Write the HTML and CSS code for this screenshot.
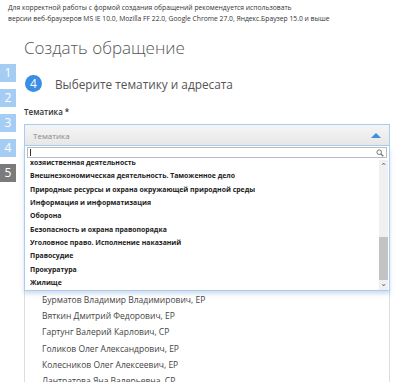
FILE: index.html
```html
<!DOCTYPE html>
<html lang="ru">
<head>
<meta charset="utf-8">
<link rel="stylesheet" href="styles.css">
</head>
<body>
<div class="notice">Для корректной работы с формой создания обращений рекомендуется использовать<br>версии веб-браузеров MS IE 10.0, Mozilla FF 22.0, Google Chrome 27.0, Яндекс.Браузер 15.0 и выше</div>
<h1 class="title">Создать обращение</h1>
<div class="layout">
  <div class="steps">
    <div class="step">1</div>
    <div class="step">2</div>
    <div class="step">3</div>
    <div class="step">4</div>
    <div class="step step-off">5</div>
  </div>
  <div class="main">
    <div class="step-title"><span class="circle">4</span><span class="step-text">Выберите тематику и адресата</span></div>
    <div class="label">Тематика *</div>
    <div class="select">
      <span class="select-text">Тематика</span>
      <span class="tri"></span>
    </div>
    <div class="wrap">
      <div class="names">
        <div class="name">Бурматов Владимир Владимирович, ЕР</div>
        <div class="name">Вяткин Дмитрий Федорович, ЕР</div>
        <div class="name">Гартунг Валерий Карлович, СР</div>
        <div class="name">Голиков Олег Александрович, ЕР</div>
        <div class="name">Колесников Олег Алексеевич, ЕР</div>
        <div class="name">Лантратова Яна Валерьевна, СР</div>
      </div>
      <div class="dropdown">
        <div class="search-row">
          <div class="search">
            <span class="caret"></span>
            <svg class="mag" width="8" height="8" viewBox="0 0 8 8"><circle cx="3.2" cy="3.2" r="2.3" fill="none" stroke="#777" stroke-width="1"/><path d="M4.9 4.9 L7.3 7.3" stroke="#777" stroke-width="1.4"/></svg>
          </div>
        </div>
        <div class="list-area">
          <div class="list">
            <div class="items">
              <div class="item">хозяиственная деятельность</div>
              <div class="item">Внешнеэкономическая деятельность. Таможенное дело</div>
              <div class="item">Природные ресурсы и охрана окружающей природной среды</div>
              <div class="item">Информация и информатизация</div>
              <div class="item">Оборона</div>
              <div class="item">Безопасность и охрана правопорядка</div>
              <div class="item">Уголовное право. Исполнение наказаний</div>
              <div class="item">Правосудие</div>
              <div class="item">Прокуратура</div>
              <div class="item">Жилище</div>
            </div>
          </div>
          <div class="scrollbar">
            <div class="arrow">&#8963;</div>
            <div class="track"><div class="thumb"></div></div>
            <div class="arrow arrow-down">&#8964;</div>
          </div>
        </div>
      </div>
    </div>
  </div>
</div>
</body>
</html>
```
FILE: styles.css
```css
html, body {
  margin: 0;
  padding: 0;
  background: #fff;
  overflow: hidden;
}
body {
  font-family: "Open Sans", "DejaVu Sans", sans-serif;
  color: #333;
  width: 400px;
  height: 382px;
}
.notice {
  height: 24px;
  font-size: 6.75px;
  line-height: 11px;
  padding: 2px 0 0 8px;
  box-sizing: border-box;
  color: #333;
}
.title {
  margin: 12px 0 0 24px;
  height: 24px;
  font-size: 17px;
  font-weight: 300;
  line-height: 24px;
  color: #555;
}
.layout {
  display: flex;
  gap: 8px;
  margin-top: 4px;
}
.steps {
  width: 16px;
  display: flex;
  flex-direction: column;
  gap: 7px;
}
.step {
  width: 16px;
  height: 18px;
  background: #a5cdf4;
  color: #fff;
  font-size: 12px;
  line-height: 18px;
  text-align: center;
}
.step-off {
  background: #7b7b7b;
}
.main {
  flex: 1;
  margin-right: 10px;
}
.step-title {
  display: flex;
  align-items: center;
  gap: 13px;
  margin-top: 11px;
  padding-left: 1px;
  height: 17px;
}
.circle {
  width: 17px;
  height: 17px;
  border-radius: 50%;
  background: #3a8ee4;
  color: #fff;
  font-size: 12px;
  line-height: 17px;
  text-align: center;
}
.step-text {
  font-size: 11.8px;
  color: #555;
}
.label {
  margin-top: 13px;
  font-size: 8px;
  font-weight: 600;
  line-height: 14px;
  color: #333;
}
.select {
  margin-top: 5px;
  height: 20px;
  border: 1px solid #a9cdf0;
  background: linear-gradient(#f5f5f5, #e7e7e7);
  display: flex;
  align-items: center;
  justify-content: space-between;
  padding: 0 8px 0 8px;
}
.select-text {
  font-size: 8px;
  color: #888;
}
.tri {
  width: 0;
  height: 0;
  border-left: 5px solid transparent;
  border-right: 5px solid transparent;
  border-bottom: 5px solid #3b8ee2;
}
.wrap {
  position: relative;
}
.names {
  border-left: 1px solid #ddd;
  border-right: 1px solid #ddd;
  padding: 146px 0 0 17px;
}
.name {
  font-size: 8.5px;
  line-height: 16.2px;
  color: #444;
  white-space: nowrap;
}
.dropdown {
  position: absolute;
  top: 0;
  left: 0;
  right: 0;
  background: #fff;
  border: 1px solid #a9cdf0;
  border-top: none;
  box-shadow: 0 3px 4px rgba(120, 160, 210, 0.35);
}
.search-row {
  padding: 1px 2px 2px 2px;
}
.search {
  height: 9px;
  border: 1px solid #bbb;
  position: relative;
  display: flex;
  align-items: center;
  justify-content: space-between;
  padding: 0 2px 0 2px;
}
.caret {
  width: 1px;
  height: 7px;
  background: #333;
}
.mag {
  display: block;
}
.list-area {
  display: flex;
  height: 130px;
}
.list {
  flex: 1;
  overflow: hidden;
}
.items {
  margin-top: -4px;
  padding-left: 5px;
}
.item {
  font-size: 6.9px;
  font-weight: 700;
  line-height: 13.35px;
  color: #222;
  white-space: nowrap;
}
.scrollbar {
  width: 9px;
  margin-right: 1px;
  background: #f0f0f0;
  display: flex;
  flex-direction: column;
}
.arrow {
  height: 10px;
  font-size: 8px;
  line-height: 12px;
  text-align: center;
  color: #666;
}
.arrow-down {
  line-height: 6px;
}
.track {
  flex: 1;
  display: flex;
  flex-direction: column;
  justify-content: flex-end;
}
.thumb {
  height: 43px;
  background: #c3c3c3;
}
```
